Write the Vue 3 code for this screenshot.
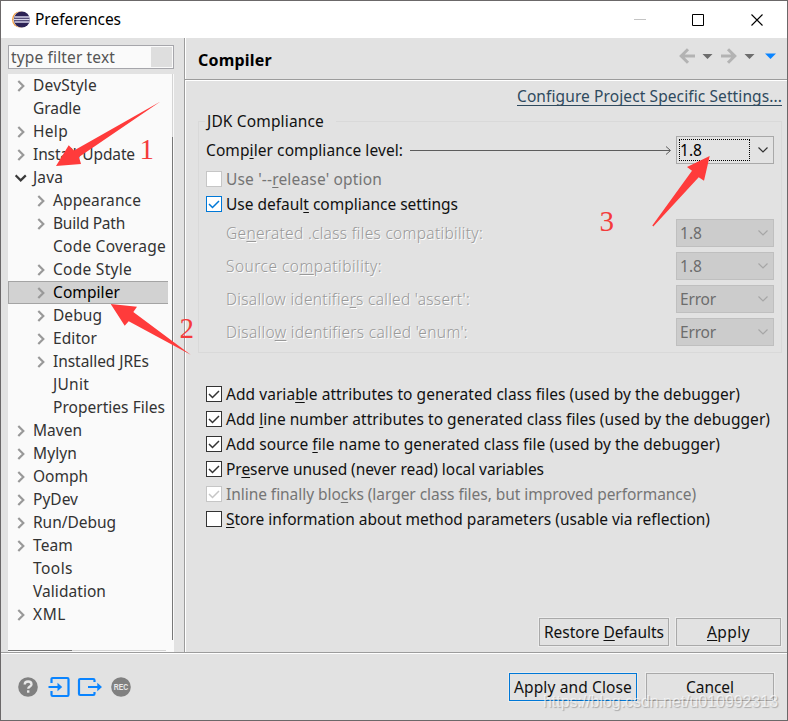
<script setup>
import { h } from 'vue'

// Sets letter spacing so a label occupies its nominal width.
const vFit = {
  mounted(el, { value }) {
    if (!value) return
    const natural = el.getBoundingClientRect().width
    el.style.letterSpacing = (value - natural) / el.textContent.length + 'px'
  },
}

// Renders "Add varia_b_le" with the marked mnemonic underlined.
const Mnemonic = ({ text }) =>
  h('span', text.split('_').map((part, i) => (i % 2 ? h('u', part) : part)))
Mnemonic.props = ['text']

const tree = [
  { t: 'DevStyle', w: 64, a: 1 },
  { t: 'Gradle', w: 48 },
  { t: 'Help', w: 35, a: 1 },
  { t: 'Install/Update', w: 102, a: 1 },
  { t: 'Java', w: 30, a: 2 },
  { t: 'Appearance', w: 88, a: 1, c: 1 },
  { t: 'Build Path', w: 72, a: 1, c: 1 },
  { t: 'Code Coverage', w: 113, c: 1 },
  { t: 'Code Style', w: 79, a: 1, c: 1 },
  { t: 'Compiler', w: 67, a: 1, c: 1, sel: 1 },
  { t: 'Debug', w: 49, a: 1, c: 1 },
  { t: 'Editor', w: 44, a: 1, c: 1 },
  { t: 'Installed JREs', w: 96, a: 1, c: 1 },
  { t: 'JUnit', w: 36, c: 1 },
  { t: 'Properties Files', w: 112, c: 1 },
  { t: 'Maven', w: 49, a: 1 },
  { t: 'Mylyn', w: 44, a: 1 },
  { t: 'Oomph', w: 55, a: 1 },
  { t: 'PyDev', w: 45, a: 1 },
  { t: 'Run/Debug', w: 83, a: 1 },
  { t: 'Team', w: 40, a: 1 },
  { t: 'Tools', w: 40 },
  { t: 'Validation', w: 73 },
  { t: 'XML', w: 33, a: 1 },
]

const compat = [
  { t: 'Ge_n_erated .class files compatibility:', w: 257, v: '1.8' },
  { t: 'Source co_m_patibility:', w: 156, v: '1.8' },
  { t: "Disallow identifie_r_s called 'assert':", w: 244, v: 'Error' },
  { t: "Disallo_w_ identifiers called 'enum':", w: 242, v: 'Error' },
]

const options = [
  { t: 'Add varia_b_le attributes to generated class files (used by the debugger)', w: 514, on: 1 },
  { t: 'Add _l_ine number attributes to generated class files (used by the debugger)', w: 544, on: 1 },
  { t: 'Add source _f_ile name to generated class file (used by the debugger)', w: 494, on: 1 },
  { t: 'Pr_e_serve unused (never read) local variables', w: 318, on: 1 },
  { t: 'Inline finally blo_c_ks (larger class files, but improved performance)', w: 470, on: 1, off: 1 },
  { t: '_S_tore information about method parameters (usable via reflection)', w: 484 },
]
</script>

<template>
  <div class="window">
    <header class="titlebar">
      <svg class="logo" width="18" height="17" viewBox="0 0 18 17">
        <circle cx="8" cy="8.5" r="8" fill="#f29a38" />
        <circle cx="9.4" cy="8.5" r="8.1" fill="#fff" />
        <circle cx="9.8" cy="8.5" r="8" fill="#2c2255" />
        <path d="M2.5 6h14.8M2 8.5h15.8M2.5 11h14.8" stroke="#d8d5ea" stroke-width="1.3" />
      </svg>
      <span class="title"><span v-fit="86">Preferences</span></span>
      <svg class="controls" width="130" height="14" viewBox="0 0 130 14">
        <path d="M0 6.5h12" stroke="#c4c4c4" />
        <path d="M58.5 1.5h11v11h-11z" fill="none" stroke="#000" />
        <path d="M117.5 1.5l11 11M128.5 1.5l-11 11" fill="none" stroke="#000" stroke-width="1.1" />
      </svg>
    </header>

    <div class="body">
      <aside class="side">
        <div class="filter"><span v-fit="104">type filter text</span><i></i></div>
        <div class="tree">
          <div v-for="n in tree" :key="n.t" class="node" :class="{ child: n.c, sel: n.sel }">
            <svg class="arrow" width="12" height="12" viewBox="0 0 12 12">
              <path v-if="n.a === 1" d="M3.3 1l5 5-5 5" class="closed" />
              <path v-if="n.a === 2" d="M.6 3.4L5.700 8.400l5.100-5" class="open" />
            </svg>
            <span v-fit="n.w">{{ n.t }}</span>
          </div>
          <div class="vscroll"></div>
          <div class="hscroll"></div>
        </div>
      </aside>

      <main class="page">
        <div class="head">
          <h1><span v-fit="74">Compiler</span></h1>
          <svg width="98" height="18" viewBox="0 0 98 18">
            <g fill="none" stroke="#b3b3b3" stroke-width="3">
              <path d="M17 9H4M10 2.2L3.2 9l6.8 6.8" />
              <path d="M43 9h13M50 2.2L56.800 9 50 15.800" />
            </g>
            <path d="M24.500 7h10l-5 5z M66.500 7h10l-5 5z" fill="#6d6d6d" />
            <path d="M87 6.500h11l-5.500 5.500z" fill="#0a84ff" />
          </svg>
        </div>

        <div class="content">
          <a class="link"><span v-fit="265">Configure Project Specific Settings...</span></a>

          <section class="group">
            <div class="legend"><span v-fit="117">JDK Compliance</span></div>
            <div class="level">
              <Mnemonic v-fit="197" text="Comp_i_ler compliance level:" />
              <svg class="lead" width="262" height="10" viewBox="0 0 262 10">
                <path d="M0 5.500h260M256 1.500l4.500 4-4.500 4" fill="none" stroke="#5c5c5c" />
              </svg>
              <div class="combo active">
                <span class="focus"><span v-fit="22">1.8</span></span>
                <svg width="12" height="8" viewBox="0 0 12 8"><path d="M1.500 1.500L6 6l4.500-4.500" /></svg>
              </div>
            </div>
            <div class="check off">
              <svg class="box" width="16" height="16"><rect x=".5" y=".5" width="15" height="15" /></svg>
              <Mnemonic v-fit="156" text="Use '--_r_elease' option" />
            </div>
            <div class="check blue">
              <svg class="box" width="16" height="16"><rect x=".5" y=".5" width="15" height="15" /><path d="M3 8l3.500 3.500L13 5" /></svg>
              <Mnemonic v-fit="232" text="Use defaul_t_ compliance settings" />
            </div>
            <div class="compat">
              <div v-for="c in compat" :key="c.t" class="crow">
                <Mnemonic v-fit="c.w" class="etched" :text="c.t" />
                <div class="combo">
                  <span v-fit="c.v === '1.8' ? 22 : 36">{{ c.v }}</span>
                  <svg width="12" height="8" viewBox="0 0 12 8"><path d="M1.500 1.500L6 6l4.500-4.500" /></svg>
                </div>
              </div>
            </div>
          </section>

          <div class="options">
            <div v-for="o in options" :key="o.t" class="check" :class="{ off: o.off }">
              <svg class="box" width="16" height="16">
                <rect x=".5" y=".5" width="15" height="15" />
                <path v-if="o.on" d="M3 8l3.500 3.500L13 5" />
              </svg>
              <Mnemonic v-fit="o.w" :text="o.t" />
            </div>
          </div>

          <div class="actions">
            <button class="restore"><Mnemonic v-fit="120" text="Restore _D_efaults" /></button>
            <button class="apply"><Mnemonic v-fit="43" text="_A_pply" /></button>
          </div>
        </div>
      </main>
    </div>

    <footer class="foot">
      <svg width="116" height="22" viewBox="0 0 116 22">
        <circle cx="10" cy="11" r="9.800" fill="#808080" />
        <path d="M6.700 8.600C6.700 6.600 8 5.500 10.100 5.500c2 0 3.400 1.100 3.400 2.900 0 2-3.300 2.200-3.300 4.400" fill="none" stroke="#e8e8e8" stroke-width="2.300" />
        <path d="M9 14.300h2.400v2.400H9z" fill="#e8e8e8" />
        <g fill="none" stroke="#0a84ff" stroke-width="2.200">
          <path d="M33.500 7V3.200q0-1.200 1.200-1.200h14.600q1.200 0 1.200 1.200v15.600q0 1.200-1.200 1.200H34.700q-1.200 0-1.200-1.200V15M30.500 11H42" />
          <path d="M76.500 6V4.200Q76.500 3 75.300 3H62.200Q61 3 61 4.200v13.600q0 1.200 1.200 1.200h13.100q1.200 0 1.200-1.200V16M70 11h11" />
        </g>
        <path d="M39.500 6.800l4.700 4.200-4.700 4.200zM79.300 6.800L84 11l-4.700 4.200z" fill="#0a84ff" />
        <circle cx="103" cy="11" r="9.800" fill="#808080" />
        <text x="95.800" y="14.100" textLength="14.500" lengthAdjust="spacingAndGlyphs" class="rec">REC</text>
      </svg>
      <div class="buttons">
        <button class="primary"><span v-fit="118">Apply and Close</span></button>
        <button class="cancel"><span v-fit="48">Cancel</span></button>
      </div>
    </footer>

    <div class="watermark"><span v-fit="235">https://blog.csdn.net/u010992313</span></div>
    <svg class="marks" width="788" height="721" viewBox="0 0 788 721">
      <path d="M56 166L68.700 145.300 74 150.500 160.500 101.500 79 157 81 164z" />
      <path d="M110.700 304L137 306.700 133.300 312 190.700 354.700 128.700 321.300 124.700 325.700z" />
      <path d="M709.700 156L687 167 692 170.700 652.300 225.500 653.300 226.500 698.700 177.300 704 180.700z" />
      <text x="139.500" y="159">1</text>
      <text x="179.500" y="338">2</text>
      <text x="599.500" y="231">3</text>
    </svg>
  </div>
</template>

<style>
body {
  overflow: hidden;
}
</style>

<style scoped>
.window {
  position: relative;
  box-sizing: border-box;
  width: 788px;
  height: 721px;
  display: flex;
  flex-direction: column;
  border: 1px solid #6b6869;
  background: #e2e2e2;
  font: 15.5px/22px "Noto Sans", "Open Sans", sans-serif;
  color: #111;
  white-space: nowrap;
}
.window * {
  box-sizing: border-box;
}
:deep(u) {
  text-decoration-thickness: 1px;
  text-underline-offset: 2px;
  text-decoration-skip-ink: none;
}
.titlebar {
  height: 37px;
  flex: none;
  display: flex;
  align-items: center;
  padding: 0 23px 0 11px;
  background: #fff;
}
.title {
  margin-left: 5px;
  padding-bottom: 1px;
  flex: 1;
  color: #000;
}
.body {
  display: flex;
  height: 614px;
  flex: none;
}
.side {
  flex: none;
  width: 183px;
  padding: 7px 10px 0 7px;
}
.filter {
  display: flex;
  align-items: center;
  justify-content: space-between;
  height: 24px;
  border: 1px solid #a6a6ab;
  background: #fafafa;
  padding: 0 1px 0 2px;
  color: #555;
}
.filter i {
  width: 21px;
  height: 20px;
  background: #dedede;
}
.tree {
  position: relative;
  height: 578px;
  margin-top: 5px;
  background: #fafafa;
  color: #333;
}
.node {
  height: 23px;
  width: 160px;
  display: flex;
  align-items: center;
  gap: 6px;
  padding-left: 7px;
}
.node > span {
  padding-bottom: 2px;
}
.node.child {
  padding-left: 27px;
}
.node.sel {
  background: #d2d2d2;
  box-shadow: inset 1px 1px #a4a4a4, inset 0 -1px #a4a4a4;
  color: #000;
}
.arrow {
  flex: none;
}
.arrow path {
  fill: none;
  stroke-width: 2.2;
}
.closed {
  stroke: #999;
}
.open {
  stroke: #3a3a3a;
}
.vscroll {
  position: absolute;
  left: 164px;
  top: 0;
  width: 1px;
  height: 566px;
  background: linear-gradient(#d4d4d4 63px, #777 63px);
}
.hscroll {
  position: absolute;
  left: 0;
  top: 576px;
  width: 158px;
  height: 1px;
  background: linear-gradient(90deg, #777 64px, #d4d4d4 64px);
}
.page {
  flex: 1;
  min-width: 0;
  border-left: 1px solid #9c9c9c;
  box-shadow: inset 1px 0 #fff;
}
.head {
  height: 42px;
  display: flex;
  align-items: center;
  justify-content: space-between;
  padding: 0 11px 5px 13px;
  border-bottom: 1px solid #9c9c9c;
  box-shadow: 0 1px #fff;
}
h1 {
  margin: 7px 0 0;
  font-size: 16px;
  font-weight: 700;
  line-height: 22px;
  color: #000;
}
.content {
  padding: 6px 6px 0 13px;
  display: flex;
  flex-direction: column;
}
.link {
  align-self: flex-end;
  margin: -1px -1px 1px 0;
  color: #2f4a5e;
  text-decoration: underline;
  text-decoration-thickness: 1px;
  text-underline-offset: 3px;
  text-decoration-skip-ink: none;
  height: 22px;
}
.group {
  width: 584px;
  height: 232px;
  margin-top: 13px;
  border: 1px solid #d9d9d9;
  padding: 0 7px;
}
.legend {
  width: 131px;
  height: 22px;
  margin-top: -12px;
  padding-left: 2px;
  margin-left: -1px;
  background: #e2e2e2;
}
.level {
  display: flex;
  align-items: center;
  height: 28px;
  margin-top: 4px;
}
.lead {
  margin-left: 7px;
}
.combo {
  width: 98px;
  height: 28px;
  margin-left: auto;
  display: flex;
  align-items: center;
  justify-content: space-between;
  padding: 0 4px 0 3px;
  border: 1px solid #bfbfbf;
  background: #ccc;
  color: #6d6d6d;
}
.combo svg path {
  fill: none;
  stroke: #a6a6a6;
  stroke-width: 1.2;
}
.combo.active {
  background: #e3e3e3;
  border-color: #a9a9a9;
  color: #000;
  padding-left: 2px;
}
.combo.active svg path {
  stroke: #333;
}
.focus {
  width: 71px;
  height: 22px;
  line-height: 21px;
  border: 1px dotted #000;
}
.check {
  display: flex;
  align-items: center;
  gap: 4px;
  height: 25px;
}
.level + .check {
  margin-top: 2px;
}
.box rect {
  fill: #fff;
  stroke: #333;
}
.box path {
  fill: none;
  stroke: #333;
  stroke-width: 1.5;
}
.blue .box rect {
  stroke: #0078d7;
}
.blue .box path {
  stroke: #0078d7;
}
.off {
  color: #757575;
}
.off .box rect {
  stroke: #c6c6c6;
}
.off .box path {
  stroke: #c6c6c6;
}
.compat {
  display: flex;
  flex-direction: column;
  gap: 5px;
  margin-top: 3px;
}
.crow {
  display: flex;
  align-items: center;
  padding-left: 20px;
}
.etched {
  color: #999;
  text-shadow: 1px 1px #fff;
  font-weight: 300;
}
.options {
  margin: 28px 0 0 8px;
}
.actions {
  display: flex;
  justify-content: flex-end;
  gap: 7px;
  margin-top: 87px;
}
button {
  height: 28px;
  padding: 0;
  border: 1px solid #a9a9a9;
  background: #e2e2e2;
  box-shadow: 0 0 0 1px #ececec;
  font: inherit;
  color: #111;
}
.restore {
  width: 130px;
}
.apply {
  width: 105px;
}
.foot {
  flex: 1;
  display: flex;
  justify-content: space-between;
  align-items: center;
  padding: 0 13px 0 17px;
  border-top: 1px solid #9c9c9c;
  box-shadow: inset 0 1px #fff;
}
.buttons {
  display: flex;
  gap: 9px;
}
.buttons button {
  width: 128px;
}
.buttons .primary {
  border-color: #0078d7;
}
.rec {
  font: 700 8.5px "Liberation Sans", sans-serif;
  fill: #e8e8e8;
}
.watermark {
  position: absolute;
  left: 542px;
  top: 690px;
  font: 16px/22px "Liberation Sans", sans-serif;
  color: rgba(255, 255, 255, 0.65);
  text-shadow: 1px 1px 1px rgba(0, 0, 0, 0.25);
}
.marks {
  position: absolute;
  left: -1px;
  top: -1px;
  pointer-events: none;
}
.marks path {
  fill: #ff3b3b;
}
.marks text {
  font: 29px "Liberation Serif", serif;
  fill: #f43b3b;
}
</style>
